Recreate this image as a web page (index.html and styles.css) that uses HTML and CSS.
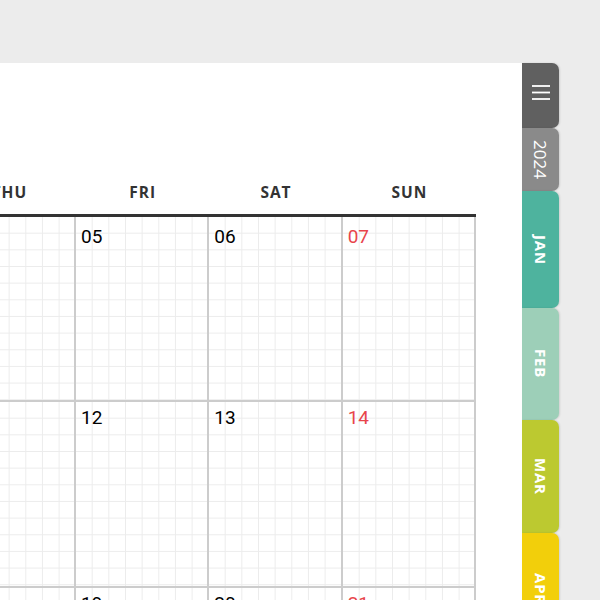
FILE: index.html
```html
<!DOCTYPE html>
<html lang="en">
<head>
<meta charset="utf-8">
<title>Planner – January 2024</title>
<link rel="stylesheet" href="styles.css">
</head>
<body>
<div class="desk">
  <main class="paper">
    <div class="calendar">
      <div class="days">
        <div class="day">MON</div>
        <div class="day">TUE</div>
        <div class="day">WED</div>
        <div class="day">THU</div>
        <div class="day">FRI</div>
        <div class="day">SAT</div>
        <div class="day">SUN</div>
      </div>
      <div class="week first">
        <div class="cell"><span class="num">01</span></div>
        <div class="cell"><span class="num">02</span></div>
        <div class="cell"><span class="num">03</span></div>
        <div class="cell"><span class="num">04</span></div>
        <div class="cell"><span class="num">05</span></div>
        <div class="cell"><span class="num">06</span></div>
        <div class="cell"><span class="num sun">07</span></div>
      </div>
      <div class="week">
        <div class="cell"><span class="num">08</span></div>
        <div class="cell"><span class="num">09</span></div>
        <div class="cell"><span class="num">10</span></div>
        <div class="cell"><span class="num">11</span></div>
        <div class="cell"><span class="num">12</span></div>
        <div class="cell"><span class="num">13</span></div>
        <div class="cell"><span class="num sun">14</span></div>
      </div>
      <div class="week">
        <div class="cell"><span class="num">15</span></div>
        <div class="cell"><span class="num">16</span></div>
        <div class="cell"><span class="num">17</span></div>
        <div class="cell"><span class="num">18</span></div>
        <div class="cell"><span class="num">19</span></div>
        <div class="cell"><span class="num">20</span></div>
        <div class="cell"><span class="num sun">21</span></div>
      </div>
    </div>
  </main>
  <nav class="tabs">
    <div class="tab tab-menu">
      <svg class="menu-icon" width="18" height="15" viewBox="0 0 18 15" aria-label="Menu">
        <line x1="0" y1="1" x2="18" y2="1" stroke="#fff" stroke-width="1.8"/>
        <line x1="0" y1="7.5" x2="18" y2="7.5" stroke="#fff" stroke-width="1.8"/>
        <line x1="0" y1="14" x2="18" y2="14" stroke="#fff" stroke-width="1.8"/>
      </svg>
    </div>
    <div class="tab tab-year"><span class="label year">2024</span></div>
    <div class="tab tab-jan"><span class="label">JAN</span></div>
    <div class="tab tab-feb"><span class="label">FEB</span></div>
    <div class="tab tab-mar"><span class="label">MAR</span></div>
    <div class="tab tab-apr"><span class="label">APR</span></div>
  </nav>
</div>
</body>
</html>
```
FILE: styles.css
```css
html, body {
  margin: 0;
  padding: 0;
}
body {
  background: #ececec;
  font-family: "Open Sans", "Liberation Sans", sans-serif;
  overflow: hidden;
}
.desk {
  display: flex;
  align-items: flex-start;
  padding-top: 63px;
  height: 600px;
  box-sizing: border-box;
  overflow: hidden;
}
.paper {
  flex: 0 0 522px;
  width: 522px;
  height: 537px;
  background: #fff;
  overflow: hidden;
  padding-top: 109px;
  box-sizing: border-box;
}
.calendar {
  width: 933.33px;
  margin-left: -457.33px;
}
.days {
  display: grid;
  grid-template-columns: repeat(7, 1fr);
  height: 42px;
  line-height: 40px;
  border-bottom: 3px solid #333;
}
.day {
  text-align: center;
  font-size: 15.5px;
  font-weight: 700;
  letter-spacing: 1px;
  color: #333;
}
.week {
  display: grid;
  grid-template-columns: repeat(7, 1fr);
  height: 185.33px;
}
.cell {
  border-right: 2px solid #cccccc;
  border-bottom: 2px solid #cccccc;
  padding: 6px 5px 0;
  background-image:
    linear-gradient(to right, transparent calc(100% - 1px), #ececec calc(100% - 1px)),
    linear-gradient(to bottom, transparent calc(100% - 1px), #ececec calc(100% - 1px));
  background-size: 16.667px 16.667px;
}
.first .cell {
  padding-top: 9.5px;
}
.num {
  display: block;
  font-family: Roboto, "Open Sans", sans-serif;
  font-size: 19px;
  line-height: 19px;
  color: #000;
}
.num.sun {
  color: #e8454b;
}
.tabs {
  display: flex;
  flex-direction: column;
  width: 37px;
  flex: 0 0 37px;
}
.tab {
  border-radius: 0 7px 7px 0;
  display: flex;
  align-items: center;
  justify-content: center;
  color: #fff;
  box-shadow: 1px 0 2px rgba(0, 0, 0, 0.12);
}
.tab-menu {
  height: 65px;
  background: #606060;
  align-items: flex-start;
}
.menu-icon {
  margin-top: 22px;
  display: block;
}
.tab-year {
  height: 63px;
  background: #8a8a8a;
}
.tab-jan {
  height: 117px;
  background: #4eb39e;
}
.tab-feb {
  height: 112px;
  background: #9dcfb8;
}
.tab-mar {
  height: 113px;
  background: #bcc930;
}
.tab-apr {
  height: 112px;
  background: #f2cf0b;
}
.label {
  writing-mode: vertical-rl;
  font-size: 15px;
  font-weight: 700;
  letter-spacing: 0.8px;
  line-height: 1;
}
.label.year {
  font-size: 17px;
  font-weight: 400;
  letter-spacing: 0;
}
```
